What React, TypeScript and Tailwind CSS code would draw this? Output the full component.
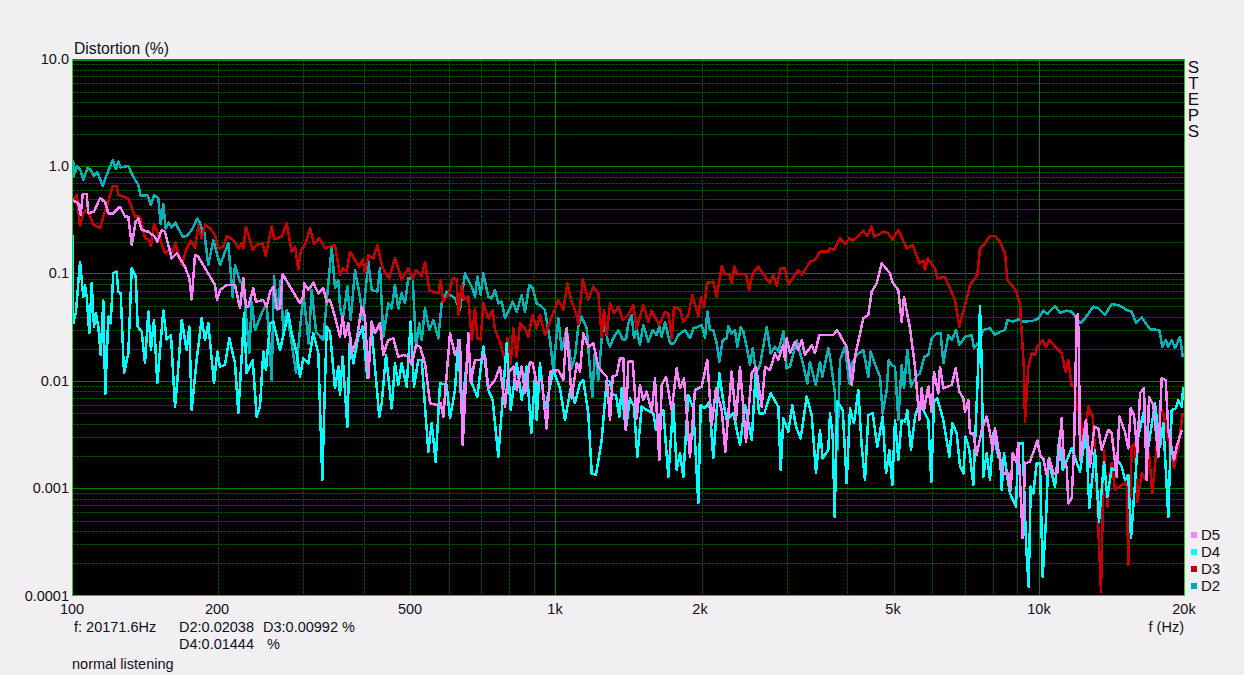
const Z5 = [70, 150];
const Z6 = [340, 240];
const Z7 = [610, 250];
const Z8 = [830, 220];
const Z9 = [1000, 290];

type Seg = [number[], number, string];

function build(segs: Seg[]): string {
  const out: string[] = [];
  let last = -1;
  for (const [o, max, s] of segs) {
    for (const p of s.trim().split(/\s+/)) {
      const [a, b] = p.split(",").map(Number);
      const x = o[0] + a / 3;
      const y = o[1] + b / 3;
      if (x <= last || x > max) continue;
      last = x;
      out.push(`${x.toFixed(1)},${y.toFixed(1)}`);
    }
  }
  return out.join(" ");
}

const D2 = build([
  [Z5, 340, "7,30 10,80 12,40 14,70 22,48 32,62 40,90 52,55 62,60 72,78 82,66 98,108 112,70 128,30 138,58 145,35 152,52 175,48 190,80 205,105 212,138 232,135 243,165 252,135 265,145 272,222 280,162 287,235 296,218 305,232 316,218 338,260 350,258 365,240 382,206 390,218 397,245 402,240 415,345 430,270 450,345 475,280 488,440 495,345 510,395 520,400 538,610 545,455 555,540 575,490 590,460 605,690 612,378 622,480 632,390 640,545 650,480 678,668 700,430 716,580 725,420 738,545 760,570 775,400 785,290 795,415 805,390"],
  [Z6, 610, "0,200 8,240 22,140 32,240 45,90 60,170 68,240 85,65 95,150 112,155 120,85 130,290 145,190 155,205 165,135 175,205 185,160 195,190 205,115 218,115 228,320 238,250 245,300 255,205 268,270 280,240 295,295 305,190 320,155 330,165 345,175 360,210 375,100 395,140 405,170 412,110 422,165 430,100 445,170 455,175 465,150 475,190 485,185 495,235 505,215 518,185 530,215 545,165 555,215 568,135 578,145 590,190 605,200 615,210 630,300 640,390 655,235 665,330 680,265 695,385 705,350 715,260 725,230 740,265 757,470 765,330 775,420 790,240 805,310"],
  [Z7, 830, "0,290 10,265 25,240 38,268 48,268 55,220 65,195 72,265 80,240 90,285 100,225 115,275 128,240 140,255 148,230 155,260 165,215 180,280 192,280 205,255 225,240 240,265 250,235 265,230 275,225 285,265 292,185 300,240 310,240 320,280 328,335 338,270 350,265 355,228 365,250 375,240 382,290 392,232 400,245 410,290 420,345 428,295 438,370 450,345 470,232 482,310 495,290 505,305 520,245 530,355 540,350 560,270 580,345 592,400 600,335 617,405 630,335 637,380 655,295"],
  [Z8, 1000, "0,410 8,470 15,520 22,690 30,420 45,380 58,490 65,430 80,405 100,390 115,470 122,395 132,425 150,470 158,580 170,510 176,420 185,435 195,440 205,600 215,435 222,505 232,390 243,500 258,470 270,460 283,410 295,405 305,355 320,340 332,340 340,430 355,345 365,360 378,330 388,375 405,350 425,345 432,385 445,370 460,330 480,325 495,345"],
  [Z9, 1185, "0,125 15,120 22,90 40,95 55,88 70,95 100,92 115,85 130,62 142,72 165,48 180,68 200,62 215,65 240,100 255,85 280,50 295,55 315,75 335,42 360,47 380,60 395,65 408,98 425,82 450,118 478,120 487,170 497,150 505,170 515,150 525,175 540,140 548,200"],
]);

const D3 = build([
  [Z5, 340, "7,155 10,150 20,135 30,228 40,190 50,180 60,195 68,222 90,235 100,200 112,165 128,108 140,108 145,135 175,145 195,200 210,200 225,265 235,268 243,288 252,222 270,265 285,310 300,295 310,305 316,278 335,345 350,295 362,272 375,295 385,225 395,265 405,225 420,235 435,255 445,295 460,290 470,258 490,270 505,295 515,280 520,295 528,230 548,300 560,285 578,280 587,318 605,228 613,268 635,260 650,220 665,305 675,290 685,358 693,300 705,285 720,235 732,282 748,265 765,295 795,285"],
  [Z6, 610, "0,105 8,85 20,95 30,35 45,60 58,80 68,58 75,100 85,45 100,55 112,15 128,85 147,115 165,55 185,118 205,85 218,118 228,90 245,108 255,65 268,150 280,155 295,160 302,120 310,185 325,165 338,115 350,118 355,225 365,135 372,180 385,170 395,300 405,205 412,295 422,298 430,190 445,235 458,210 465,270 480,305 495,360 502,295 512,370 520,265 530,350 540,250 555,265 565,290 578,225 590,265 600,225 615,285 635,230 655,180 670,210 682,130 695,185 705,210 715,250 728,118 745,180 760,140 775,160 785,290 792,210 800,285"],
  [Z7, 830, "0,160 12,190 25,170 38,210 55,195 70,165 80,235 100,165 115,215 125,182 148,225 165,185 175,190 185,265 192,172 210,178 220,215 235,195 247,135 265,198 273,140 282,170 292,98 310,95 320,140 335,48 345,72 358,72 365,98 373,50 382,72 408,72 418,120 428,70 445,50 480,100 490,75 500,108 512,55 525,55 535,105 565,60 575,75 600,35 615,30 630,5 655,5"],
  [Z8, 1010, "0,85 12,90 30,55 45,72 58,55 68,62 85,48 100,32 112,48 125,20 132,50 150,42 160,35 175,40 187,60 205,30 230,85 248,75 268,130 280,122 285,150 293,115 315,145 322,175 345,170 360,205 375,240 388,320 405,255 420,195 442,165 450,85 465,70 480,48 495,48 510,65 525,100 532,180"],
  [Z9, 1185, "47,0 60,40 65,130 72,240 75,395 80,310 85,230 95,190 105,195 112,170 128,150 138,172 148,150 170,175 185,190 197,245 205,210 215,288 225,290 230,360 240,355 250,480 265,350 278,380 285,480 303,905 312,480 322,650 335,520 345,600 358,590 380,575 385,825 395,470 405,460 412,635 425,550 437,570 447,490 457,610 470,470 480,345 492,380 522,535 535,470 548,370"],
]);

const D5 = build([
  [Z5, 340, "7,150 10,152 25,160 32,195 38,132 50,132 55,190 72,185 90,145 105,155 115,190 130,190 150,170 165,200 175,200 185,285 197,215 205,205 215,240 235,245 255,260 262,275 275,240 285,245 305,325 320,310 345,350 358,385 365,448 375,315 385,320 435,405 441,450 450,420 470,405 495,405 510,475 520,385 528,470 535,470 550,415 558,455 580,450 590,470 600,425 610,410 620,475 630,475 638,372 660,410 690,460 700,440 703,400 715,420 730,398 745,430 760,415 770,455 780,450 795,500"],
  [Z6, 610, "0,290 8,230 15,290 25,250 35,340 50,300 65,200 75,230 85,415 95,245 105,280 120,250 130,345 145,300 160,295 175,350 190,345 205,350 215,375 228,315 240,320 255,370 270,490 290,495 302,490 310,530 330,280 345,345 360,300 368,615 385,280 392,425 405,360 420,360 435,345 445,445 465,420 480,380 495,500 505,400 520,380 530,450 545,380 555,460 570,365 578,370 590,430 605,420 620,565 630,395 655,390 670,420 680,265 695,475 710,370 720,395 730,280 745,320 760,310 775,380 790,400 800,410"],
  [Z7, 893, "0,510 8,380 20,375 30,325 40,325 47,540 55,335 68,335 80,505 90,405 100,450 110,425 125,485 135,385 148,630 155,405 168,380 185,480 200,355 210,415 222,385 240,620 255,420 275,410 292,330 305,525 318,415 335,480 346,605 365,365 378,510 390,350 408,575 425,370 438,350 455,470 465,350 480,360 495,310 505,330 520,285 525,330 530,265 540,310 555,275 565,300 575,270 585,315 605,285 615,310 628,255 650,255 670,255 682,240 695,265 710,290 725,405 735,320 760,205 775,195 785,125 800,100 815,40 840,70"],
  [Z8, 1000, "175,150 188,188 205,210 215,305 222,230 240,325 255,440 268,600 275,505 282,570 295,500 305,575 312,455 325,520 330,440 340,505 365,495 377,445 388,515 400,535 405,575 415,540 420,640 430,640 440,705 455,630 470,590 480,640 488,690 495,625"],
  [Z9, 1185, "0,510 10,550 25,550 32,600 38,490 48,515 55,460 68,745 75,520 90,515 112,452 122,500 130,505 140,555 148,505 160,550 172,550 185,385 192,520 200,530 205,640 215,625 222,480 230,75 234,72 237,200 240,510 258,390 270,530 283,410 295,415 305,480 325,420 335,430 350,560 358,380 375,425 385,475 392,355 402,375 412,490 420,310 432,295 440,570 447,320 460,345 475,500 485,265 497,270 505,420 522,510 530,470 545,420"],
]);

const D4 = build([
  [Z5, 340, "7,255 10,520 18,485 30,335 40,440 45,405 50,440 58,550 65,400 72,530 78,490 85,530 92,615 100,452 106,732 115,500 122,520 130,370 140,365 145,425 152,430 162,670 175,610 185,355 197,378 203,530 215,545 225,640 235,485 243,600 252,510 262,700 280,482 290,568 303,555 315,770 322,695 335,510 350,600 358,530 365,780 380,630 395,505 405,570 415,520 432,700 442,605 450,650 465,645 478,565 495,640 505,790 515,620 522,490 530,670 548,630 560,800 570,770 580,605 588,660 600,520 610,515 630,600 655,490 665,550 680,610 690,680 700,625 715,640 730,550 745,610 757,990 765,700 770,530 780,545 795,715 805,650"],
  [Z6, 610, "0,465 8,350 22,560 30,285 40,370 55,290 68,260 82,415 95,270 118,530 125,490 138,345 155,505 165,370 175,435 185,370 200,440 212,245 222,440 235,360 245,360 265,635 275,550 287,665 300,430 320,435 330,535 345,450 355,300 365,520 385,320 395,430 412,470 430,320 445,450 458,480 475,650 490,450 500,310 512,510 530,370 545,480 560,380 574,580 585,410 590,540 600,370 615,510 640,390 660,445 675,540 692,445 705,490 720,430 730,420 745,520 755,700 768,705 785,600 800,420"],
  [Z7, 830, "0,395 8,435 18,435 28,500 35,415 47,540 60,445 72,470 82,620 95,470 110,480 130,490 138,540 148,495 160,480 175,680 190,460 200,660 210,610 220,680 235,435 250,475 265,760 272,465 285,475 298,455 310,625 328,370 340,455 350,510 370,490 390,585 405,465 425,570 437,370 447,490 463,490 482,430 505,470 512,660 520,505 535,545 547,465 558,530 572,565 590,440 605,495 618,670 630,540 638,625 655,600"],
  [Z8, 1000, "0,580 8,650 14,890 22,545 38,570 50,790 60,565 72,610 85,510 95,680 105,780 115,585 128,580 142,680 158,590 168,760 178,690 187,795 195,600 205,720 215,600 225,605 232,570 243,690 255,590 265,560 280,570 295,600 304,785 312,545 322,535 340,600 358,710 367,610 380,640 390,740 400,760 407,650 418,690 430,795 445,430 450,258 455,430 460,770 470,700 480,780 490,640 505,710"],
  [Z9, 1185, "0,490 5,600 12,490 22,560 30,610 48,650 55,460 68,460 78,760 86,890 92,590 100,610 110,520 120,520 128,860 138,690 145,510 165,590 178,445 188,540 215,475 240,545 258,420 268,655 285,480 297,695 312,515 322,620 335,535 345,540 350,505 365,530 375,570 385,555 393,745 405,580 415,440 430,370 445,470 465,340 480,470 490,400 505,680 515,360 528,355 535,330 545,350 550,290"],
]);

const minorX: number[] = [];
const minorY: number[] = [];
for (let d = 0; d < 3; d++) {
  for (let n = 2; n < 10; n++) {
    const x = 72.5 + (d + Math.log10(n)) * 483.5;
    if (x < 1184) minorX.push(Math.round(x) + 0.5);
  }
}
for (let d = 0; d < 5; d++) {
  for (let n = 2; n < 10; n++) {
    minorY.push(Math.round(59.5 + (d + 1 - Math.log10(n)) * 107.2) + 0.5);
  }
}
const majorY = [166.5, 273.5, 381.5, 488.5];
const majorX = [555.5, 1039.5];

const yLabels: [string, number][] = [
  ["10.0", 0],
  ["1.0", 107],
  ["0.1", 214],
  ["0.01", 322],
  ["0.001", 429],
  ["0.0001", 537],
];
const xLabels: [string, number][] = [
  ["100", 72],
  ["200", 217],
  ["500", 410],
  ["1k", 555],
  ["2k", 700],
  ["5k", 893],
  ["10k", 1039],
  ["20k", 1184],
];
const legend: [string, string][] = [
  ["D5", "bg-[#ff80ff]"],
  ["D4", "bg-[#00ffff]"],
  ["D3", "bg-[#c00000]"],
  ["D2", "bg-[#00a8b0]"],
];

export default function App() {
  return (
    <div className="w-[1244px] h-[675px] overflow-hidden bg-[#f1eff1] text-[#101018] font-['Liberation_Sans',Arial,sans-serif] text-[14.5px] leading-4">
      <div className="h-[59px] flex items-end pl-[74px] pb-[2px] text-[15.7px]">Distortion (%)</div>
      <div className="flex h-[537px]">
        <div className="relative w-[72px] shrink-0">
          {yLabels.map(([t, y]) => (
            <span
              key={t}
              className="absolute right-[3px] -translate-y-1/2 whitespace-nowrap"
              style={{ top: y }}
            >
              {t}
            </span>
          ))}
        </div>
        <svg
          width={1113}
          height={537}
          viewBox="72 59 1113 537"
          className="block shrink-0 bg-black"
          shapeRendering="crispEdges"
          fill="none"
        >
          {minorY.map((y) => (
            <line key={`y${y}`} x1={72} x2={1184} y1={y} y2={y} stroke="#005400" strokeDasharray="3 1" />
          ))}
          {minorX.map((x) => (
            <line key={`x${x}`} x1={x} x2={x} y1={59} y2={595} stroke="#005400" strokeDasharray="3 1" />
          ))}
          {majorY.map((y) => (
            <line key={`my${y}`} x1={72} x2={1184} y1={y} y2={y} stroke="#008000" />
          ))}
          {majorX.map((x) => (
            <line key={`mx${x}`} x1={x} x2={x} y1={59} y2={595} stroke="#008000" />
          ))}
          <polyline points={D2} stroke="#00b4b8" strokeWidth={2.5} strokeLinejoin="round" />
          <polyline points={D3} stroke="#c80000" strokeWidth={2.5} strokeLinejoin="round" />
          <polyline points={D4} stroke="#00ffff" strokeWidth={2.5} strokeLinejoin="round" />
          <polyline points={D5} stroke="#ff80ff" strokeWidth={2.5} strokeLinejoin="round" />
          <line x1={72} x2={1185} y1={60} y2={60} stroke="#009000" strokeWidth={2} />
          <line x1={72.5} x2={72.5} y1={59} y2={596} stroke="#30c030" />
          <line x1={1184.5} x2={1184.5} y1={59} y2={596} stroke="#30c030" />
          <line x1={72} x2={1185} y1={595.5} y2={595.5} stroke="#30c030" />
        </svg>
        <div className="flex flex-col justify-between pl-[2px] flex-1 pt-[1px] pb-[2px]">
          <div className="w-[13px] text-center break-all text-[17px] leading-[16px]">STEPS</div>
          <div className="flex flex-col">
            {legend.map(([t, c]) => (
              <div key={t} className="flex items-center h-[17px] pl-[4px] gap-[4px] text-[15px]">
                <span className={`w-[6px] h-[6px] ${c}`} />
                <span>{t}</span>
              </div>
            ))}
          </div>
        </div>
      </div>
      <div className="relative h-[23px]">
        {xLabels.map(([t, x]) => (
          <span
            key={t}
            className="absolute top-[5px] -translate-x-1/2 whitespace-nowrap"
            style={{ left: x }}
          >
            {t}
          </span>
        ))}
      </div>
      <div className="flex pl-[74px] pr-[60px] h-[17px]">
        <span className="w-[105px]">f: 20171.6Hz</span>
        <span className="w-[84px]">D2:0.02038</span>
        <span>D3:0.00992 %</span>
        <span className="ml-auto">f (Hz)</span>
      </div>
      <div className="flex pl-[179px] h-[17px]">
        <span className="w-[88px]">D4:0.01444</span>
        <span>%</span>
      </div>
      <div className="pl-[72px] pt-[3px]">normal listening</div>
    </div>
  );
}
